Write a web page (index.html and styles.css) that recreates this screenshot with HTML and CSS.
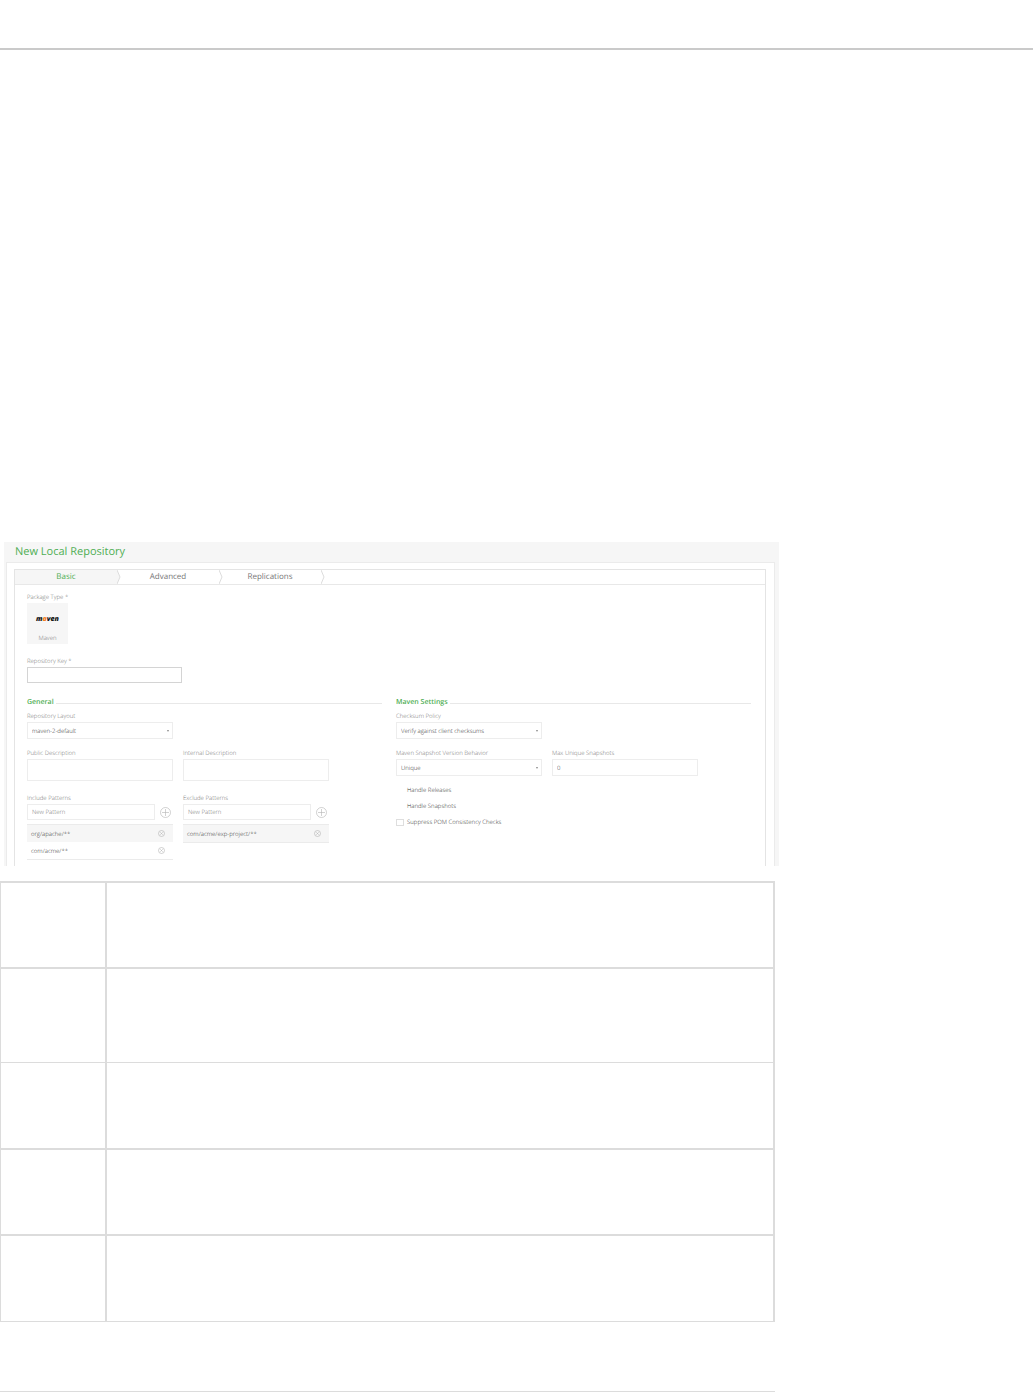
FILE: index.html
```html
<!DOCTYPE html>
<html lang="en">
<head>
<meta charset="utf-8">
<title>New Local Repository</title>
<link rel="stylesheet" href="styles.css">
</head>
<body>
<header class="site-header"></header>
<main class="article">
  <section class="screen">
    <h1 class="screen-title">New Local Repository</h1>
    <div class="panel">
      <form class="wizard">
        <nav class="tabs">
          <button type="button" class="tab tab-active">Basic<svg class="chevron" viewBox="0 0 4 14"><path d="M0 0L3 7L0 14"/></svg></button>
          <button type="button" class="tab">Advanced<svg class="chevron" viewBox="0 0 4 14"><path d="M0 0L3 7L0 14"/></svg></button>
          <button type="button" class="tab">Replications<svg class="chevron" viewBox="0 0 4 14"><path d="M0 0L3 7L0 14"/></svg></button>
        </nav>
        <div class="form-body">
          <div class="field">
            <span class="label">Package Type *</span>
            <button type="button" class="package"><span class="logo">m<span class="logo-accent">a</span>ven</span><span class="package-name">Maven</span></button>
          </div>
          <div class="field field-key">
            <label class="label" for="key">Repository Key *</label>
            <input class="control control-key" id="key" type="text">
          </div>
          <div class="columns">
            <section class="group">
              <h2 class="group-title">General</h2>
              <div class="pair">
                <div class="field">
                  <label class="label" for="layout">Repository Layout</label>
                  <div class="select"><select class="control" id="layout"><option>maven-2-default</option></select></div>
                </div>
              </div>
              <div class="pair">
                <div class="field">
                  <label class="label" for="public">Public Description</label>
                  <textarea class="control control-area" id="public"></textarea>
                </div>
                <div class="field">
                  <label class="label" for="internal">Internal Description</label>
                  <textarea class="control control-area" id="internal"></textarea>
                </div>
              </div>
              <div class="pair pair-patterns">
                <div class="field">
                  <label class="label" for="include">Include Patterns</label>
                  <div class="adder"><input class="control control-pattern" id="include" type="text" placeholder="New Pattern"><button type="button" class="icon-button" aria-label="Add include pattern"><svg class="plus" viewBox="0 0 11 11"><circle cx="5.500" cy="5.500" r="5"/><path d="M5.500 2v7M2 5.500h7"/></svg></button></div>
                  <ul class="patterns">
                    <li class="pattern pattern-shaded">org/apache/**<button type="button" class="icon-button" aria-label="Remove"><svg class="remove" viewBox="0 0 7 7"><circle cx="3.500" cy="3.500" r="3"/><path d="M2.300 2.300l2.400 2.400M4.700 2.300l-2.400 2.400"/></svg></button></li>
                    <li class="pattern">com/acme/**<button type="button" class="icon-button" aria-label="Remove"><svg class="remove" viewBox="0 0 7 7"><circle cx="3.500" cy="3.500" r="3"/><path d="M2.300 2.300l2.400 2.400M4.700 2.300l-2.400 2.400"/></svg></button></li>
                  </ul>
                </div>
                <div class="field">
                  <label class="label" for="exclude">Exclude Patterns</label>
                  <div class="adder"><input class="control control-pattern" id="exclude" type="text" placeholder="New Pattern"><button type="button" class="icon-button" aria-label="Add exclude pattern"><svg class="plus" viewBox="0 0 11 11"><circle cx="5.500" cy="5.500" r="5"/><path d="M5.500 2v7M2 5.500h7"/></svg></button></div>
                  <ul class="patterns">
                    <li class="pattern pattern-shaded">com/acme/exp-project/**<button type="button" class="icon-button" aria-label="Remove"><svg class="remove" viewBox="0 0 7 7"><circle cx="3.500" cy="3.500" r="3"/><path d="M2.300 2.300l2.400 2.400M4.700 2.300l-2.400 2.400"/></svg></button></li>
                  </ul>
                </div>
              </div>
            </section>
            <section class="group">
              <h2 class="group-title">Maven Settings</h2>
              <div class="pair">
                <div class="field">
                  <label class="label" for="checksum">Checksum Policy</label>
                  <div class="select"><select class="control" id="checksum"><option>Verify against client checksums</option></select></div>
                </div>
              </div>
              <div class="pair">
                <div class="field">
                  <label class="label" for="behavior">Maven Snapshot Version Behavior</label>
                  <div class="select"><select class="control" id="behavior"><option>Unique</option></select></div>
                </div>
                <div class="field">
                  <label class="label" for="max">Max Unique Snapshots</label>
                  <input class="control" id="max" type="text" value="0">
                </div>
              </div>
              <div class="checks">
                <label class="check"><input class="box box-plain" type="checkbox" checked>Handle Releases</label>
                <label class="check"><input class="box box-plain" type="checkbox" checked>Handle Snapshots</label>
                <label class="check"><input class="box" type="checkbox">Suppress POM Consistency Checks</label>
              </div>
            </section>
          </div>
        </div>
      </form>
    </div>
  </section>
  <table class="details">
    <tr class="row"><td></td><td></td></tr>
    <tr class="row row-tall"><td></td><td></td></tr>
    <tr class="row row-thin"><td></td><td></td></tr>
    <tr class="row"><td></td><td></td></tr>
    <tr class="row"><td></td><td></td></tr>
  </table>
  <hr class="rule">
</main>
</body>
</html>
```
FILE: styles.css
```css
*, *::before, *::after { box-sizing: border-box; }
body {
  margin: 0;
  background: #fff;
  color: #333;
  font: 300 6px/8px "Open Sans", "Noto Sans", sans-serif;
  text-rendering: geometricPrecision;
}
h1, h2, ul { margin: 0; padding: 0; }
button, input, select, textarea { margin: 0; font: inherit; color: inherit; text-rendering: inherit; }
.site-header { height: 50px; border-bottom: 2px solid #cacaca; }
.article { max-width: 779px; padding: 492px 0 0; }

.screen { margin-left: 4px; padding: 0 4px 0 2px; background: #f6f6f6; }
.screen-title {
  padding: 2px 9px;
  color: #4fae54;
  font-size: 11px;
  line-height: 16px;
  font-weight: 400;
}
.panel {
  padding: 6px 8px 0;
  background: #fff;
  border: solid #ebebeb;
  border-width: 1px 1px 0;
}
.wizard { border: solid #e4e4e4; border-width: 1px 1px 0; margin-left: -1px; }
.tabs { display: flex; height: 15px; border-bottom: 1px solid #e8e8e8; }
.tab {
  display: flex;
  align-items: center;
  justify-content: center;
  position: relative;
  width: 102px;
  padding: 0;
  border: 0;
  background: none;
  color: #777;
  font-size: 8px;
  line-height: 16px;
  font-weight: 400;
}
.tab-active { background: #f6f6f6; color: #4fae54; }
.chevron {
  position: absolute;
  left: 100%;
  top: 0;
  width: 4px;
  height: 14px;
  fill: #fff;
  stroke: #dcdcdc;
  z-index: 1;
}
.tab-active .chevron { fill: #f6f6f6; }

.form-body { padding: 8px 14px 6px 12px; }
.label { display: block; margin-bottom: 2px; color: #757575; }
.package {
  display: flex;
  flex-direction: column;
  align-items: center;
  justify-content: flex-end;
  gap: 10px;
  width: 41px;
  height: 41px;
  padding: 0 0 2px;
  border: 0;
  background: #f6f6f6;
  color: #757575;
}
.logo { color: #111; font: italic 800 7px/8px "Open Sans", sans-serif; }
.logo-accent { color: #f47b20; }
.package-name { font-size: 6px; }
.field-key { margin-top: 13px; }
.control {
  display: block;
  width: 100%;
  height: 17px;
  padding: 0 4px;
  border: 1px solid #ededed;
  border-radius: 0;
  background: #fff;
  outline: 0;
  appearance: none;
}
.control::placeholder { color: #757575; opacity: 1; }
.control-key { width: 155px; height: 16px; border-color: #d4d4d4; }
.control-area { height: 22px; resize: none; }
.control-pattern { width: 128px; height: 16px; }

.columns { display: grid; grid-template-columns: 1fr 1fr; gap: 14px; margin-top: 16px; }
.group-title {
  display: flex;
  align-items: center;
  gap: 2px;
  margin-bottom: 5px;
  color: #4fae54;
  font-size: 7px;
  line-height: 8px;
  font-weight: 600;
}
.group-title::after { content: ""; flex: 1; height: 1px; background: #e8e8e8; }
.pair { display: grid; grid-template-columns: 146px 146px; gap: 10px; margin-bottom: 10px; }
.pair-patterns { margin: 13px 0 0; }
.select { position: relative; }
.select::after {
  content: "";
  position: absolute;
  right: 4px;
  top: 8px;
  border: solid transparent;
  border-width: 2px 1px 0;
  border-top-color: #888;
}
.adder { display: flex; align-items: center; gap: 5px; }
.icon-button { display: block; padding: 0; border: 0; background: none; }
.icon-button svg { display: block; fill: none; stroke: #b4b4b4; }
.plus { width: 11px; height: 11px; stroke-width: 0.6; }
.remove { width: 7px; height: 7px; stroke-width: 0.6; }
.patterns { margin-top: 4px; border: solid #ebebeb; border-width: 1px 0; list-style: none; }
.pattern {
  display: flex;
  align-items: center;
  justify-content: space-between;
  height: 17px;
  padding: 0 8px 0 4px;
}
.pattern-shaded { background: #f6f6f6; }
.checks { display: grid; gap: 8px; }
.check { display: flex; align-items: center; gap: 3px; }
.box { appearance: none; width: 8px; height: 7px; border: 1px solid #dedede; }
.box-plain { border-color: transparent; }

.details {
  width: calc(100% - 4px);
  margin-top: 15px;
  border-spacing: 0;
  table-layout: fixed;
}
.details td { padding: 0; border: 0 solid #dcdcdc; border-top-width: 2px; }
.details td:first-child { width: 105px; border-left-width: 1px; }
.details td:last-child { border-left-width: 2px; border-right-width: 2px; }
.details .row:last-child td { height: 88px; border-bottom-width: 1px; }
.row { height: 86px; }
.row-tall { height: 95px; }
.row-thin td { border-top-width: 1px; }
.rule { height: 1px; margin: 69px 4px 0 0; border: 0; background: #dcdcdc; }
```
